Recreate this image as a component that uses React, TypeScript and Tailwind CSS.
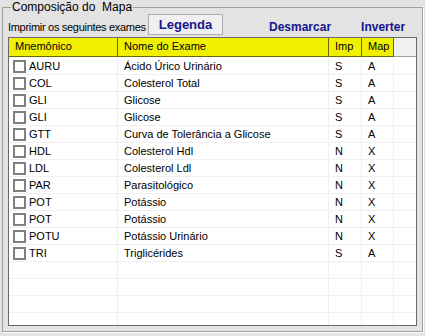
import React from 'react';

interface Exam {
  code: string;
  name: string;
  imp: string;
  map: string;
}

const exams: Exam[] = [
  { code: 'AURU', name: 'Ácido Úrico Urinário', imp: 'S', map: 'A' },
  { code: 'COL', name: 'Colesterol Total', imp: 'S', map: 'A' },
  { code: 'GLI', name: 'Glicose', imp: 'S', map: 'A' },
  { code: 'GLI', name: 'Glicose', imp: 'S', map: 'A' },
  { code: 'GTT', name: 'Curva de Tolerância a Glicose', imp: 'S', map: 'A' },
  { code: 'HDL', name: 'Colesterol Hdl', imp: 'N', map: 'X' },
  { code: 'LDL', name: 'Colesterol Ldl', imp: 'N', map: 'X' },
  { code: 'PAR', name: 'Parasitológico', imp: 'N', map: 'X' },
  { code: 'POT', name: 'Potássio', imp: 'N', map: 'X' },
  { code: 'POT', name: 'Potássio', imp: 'N', map: 'X' },
  { code: 'POTU', name: 'Potássio Urinário', imp: 'N', map: 'X' },
  { code: 'TRI', name: 'Triglicérides', imp: 'S', map: 'A' },
];

const font = { fontFamily: '"Liberation Sans", Arial, sans-serif' };

function Checkbox() {
  return <span className="w-[13px] h-[13px] border-2 border-[#808080] bg-white shrink-0" />;
}

function Row({ exam }: { exam?: Exam }) {
  return (
    <div className="flex h-[17px] border-b border-[#f0f0f0] bg-white text-[11px] text-black leading-[16px]">
      <div className="w-[109px] flex items-center gap-[3px] pl-[4px] border-r border-[#f0f0f0]">
        {exam && <Checkbox />}
        {exam && <span>{exam.code}</span>}
      </div>
      <div className="w-[211px] pl-[6px] border-r border-[#f0f0f0]">{exam?.name}</div>
      <div className="w-[33px] pl-[6px] border-r border-[#f0f0f0]">{exam?.imp}</div>
      <div className="w-[32px] pl-[6px] border-r border-[#f0f0f0]">{exam?.map}</div>
      <div className="flex-1" />
    </div>
  );
}

export default function App() {
  return (
    <div className="w-[425px] h-[336px] bg-[#e3e3e3] pt-[7px] px-[2px] overflow-hidden" style={font}>
      {/* Group box */}
      <div className="relative h-[325px] border border-[#a0a0a0] shadow-[1px_1px_0_#ffffff] px-[5px] pt-[5px]">
        <span className="absolute -top-[8px] left-[8px] px-[1px] bg-[#e3e3e3] text-[12px] leading-[14px] text-black whitespace-pre">
          Composição do  Mapa
        </span>

        {/* Toolbar */}
        <div className="flex items-start h-[24px] text-[11px]">
          <span className="w-[135px] mt-[6px] text-black tracking-[-0.3px] whitespace-nowrap">Imprimir os seguintes exames</span>
          <button className="ml-[5px] mt-[1px] w-[75px] h-[21px] bg-[#f0f0f0] border border-[#adadad] text-[13px] font-bold text-[#16168c]">
            Legenda
          </button>
          <span className="ml-[46px] mt-[5px] text-[12px] font-bold text-[#16168c]">Desmarcar</span>
          <span className="ml-[30px] mt-[5px] text-[12px] font-bold text-[#16168c]">Inverter</span>
        </div>

        {/* Grid */}
        <div className="w-[409px] h-[289px] border border-[#696969] bg-white overflow-hidden">
          <div className="flex h-[19px] text-[11px] leading-[17px] text-black">
            <div className="w-[109px] pl-[6px] bg-[#f0f000] border-r border-b border-[#6b6b00]">Mnemônico</div>
            <div className="w-[211px] pl-[6px] bg-[#f0f000] border-r border-b border-[#6b6b00]">Nome do Exame</div>
            <div className="w-[33px] pl-[6px] bg-[#f0f000] border-r border-b border-[#6b6b00]">Imp</div>
            <div className="w-[32px] pl-[6px] bg-[#f0f000] border-r border-b border-[#6b6b00]">Map</div>
            <div className="flex-1 bg-[#f0f0f0] border-b border-[#a0a0a0]" />
          </div>
          <div className="h-[1px] bg-white" />
          {exams.map((e, i) => (
            <Row key={i} exam={e} />
          ))}
          {[0, 1, 2, 3].map((i) => (
            <Row key={'e' + i} />
          ))}
        </div>
      </div>
    </div>
  );
}
